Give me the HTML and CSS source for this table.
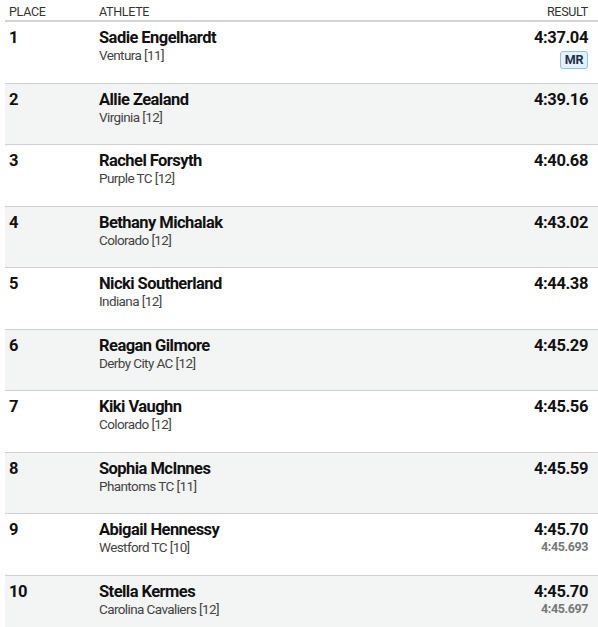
FILE: index.html
```html
<!DOCTYPE html>
<html>
<head>
<meta charset="utf-8">
<link rel="stylesheet" href="styles.css">
</head>
<body>
<div class="table">
  <div class="head">
    <div class="c-place">PLACE</div>
    <div class="c-athlete">ATHLETE</div>
    <div class="c-result">RESULT</div>
  </div>
  <div class="row">
    <div class="c-place">1</div>
    <div class="c-athlete"><div class="name">Sadie Engelhardt</div><div class="team">Ventura [11]</div></div>
    <div class="c-result"><div class="time">4:37.04</div><span class="badge">MR</span></div>
  </div>
  <div class="row alt">
    <div class="c-place">2</div>
    <div class="c-athlete"><div class="name">Allie Zealand</div><div class="team">Virginia [12]</div></div>
    <div class="c-result"><div class="time">4:39.16</div></div>
  </div>
  <div class="row">
    <div class="c-place">3</div>
    <div class="c-athlete"><div class="name">Rachel Forsyth</div><div class="team">Purple TC [12]</div></div>
    <div class="c-result"><div class="time">4:40.68</div></div>
  </div>
  <div class="row alt">
    <div class="c-place">4</div>
    <div class="c-athlete"><div class="name">Bethany Michalak</div><div class="team">Colorado [12]</div></div>
    <div class="c-result"><div class="time">4:43.02</div></div>
  </div>
  <div class="row">
    <div class="c-place">5</div>
    <div class="c-athlete"><div class="name">Nicki Southerland</div><div class="team">Indiana [12]</div></div>
    <div class="c-result"><div class="time">4:44.38</div></div>
  </div>
  <div class="row alt">
    <div class="c-place">6</div>
    <div class="c-athlete"><div class="name">Reagan Gilmore</div><div class="team">Derby City AC [12]</div></div>
    <div class="c-result"><div class="time">4:45.29</div></div>
  </div>
  <div class="row">
    <div class="c-place">7</div>
    <div class="c-athlete"><div class="name">Kiki Vaughn</div><div class="team">Colorado [12]</div></div>
    <div class="c-result"><div class="time">4:45.56</div></div>
  </div>
  <div class="row alt">
    <div class="c-place">8</div>
    <div class="c-athlete"><div class="name">Sophia McInnes</div><div class="team">Phantoms TC [11]</div></div>
    <div class="c-result"><div class="time">4:45.59</div></div>
  </div>
  <div class="row">
    <div class="c-place">9</div>
    <div class="c-athlete"><div class="name">Abigail Hennessy</div><div class="team">Westford TC [10]</div></div>
    <div class="c-result"><div class="time">4:45.70</div><div class="sub">4:45.693</div></div>
  </div>
  <div class="row alt">
    <div class="c-place">10</div>
    <div class="c-athlete"><div class="name">Stella Kermes</div><div class="team">Carolina Cavaliers [12]</div></div>
    <div class="c-result"><div class="time">4:45.70</div><div class="sub">4:45.697</div></div>
  </div>
</div>
</body>
</html>
```

FILE: styles.css
```css
html, body {
  margin: 0;
  padding: 0;
  background: #fff;
}
body {
  font-family: Roboto, "Liberation Sans", sans-serif;
  color: #111;
  overflow: hidden;
}
.table {
  margin-left: 5px;
}
.head, .row {
  display: grid;
  grid-template-columns: 90px 1fr 120px;
  padding: 0 10px 0 4px;
}
.head {
  align-items: start;
  font-size: 12.5px;
  color: #333;
  padding-top: 4px;
  border-bottom: 2px solid #d4d4d4;
  box-sizing: content-box;
  height: 16px;
  letter-spacing: -0.3px;
}
.head .c-result {
  text-align: right;
}
.row {
  border-bottom: 1.5px solid #cfcfcf;
  padding-top: 6px;
  box-sizing: border-box;
  height: 61.5px;
}
.row.alt {
  background: #f3f4f4;
}
.c-place {
  font-weight: 700;
  font-size: 16.5px;
  letter-spacing: -0.4px;
  line-height: 20px;
}
.head .c-place {
  font-weight: 400;
  font-size: 12.5px;
  line-height: 16px;
  letter-spacing: -0.3px;
}
.name {
  font-weight: 700;
  font-size: 16.5px;
  line-height: 20px;
  letter-spacing: -0.55px;
}
.team {
  font-size: 13.5px;
  color: #444;
  line-height: 16px;
  margin-top: -1px;
  letter-spacing: -0.6px;
}
.c-result {
  text-align: right;
  display: flex;
  flex-direction: column;
  align-items: flex-end;
}
.head .c-result {
  display: block;
}
.time {
  font-weight: 700;
  font-size: 16.5px;
  line-height: 20px;
  letter-spacing: -0.4px;
}
.sub {
  font-weight: 700;
  font-size: 12.5px;
  color: #777;
  line-height: 14px;
  letter-spacing: -0.4px;
}
.badge {
  margin-top: 3px;
  display: inline-block;
  box-sizing: border-box;
  width: 28px;
  height: 18px;
  line-height: 16px;
  text-align: center;
  font-weight: 700;
  font-size: 12.5px;
  letter-spacing: -0.3px;
  color: #1c3048;
  background: #e2f1fb;
  border: 1px solid #8fc3e3;
  border-radius: 3px;
}
```
